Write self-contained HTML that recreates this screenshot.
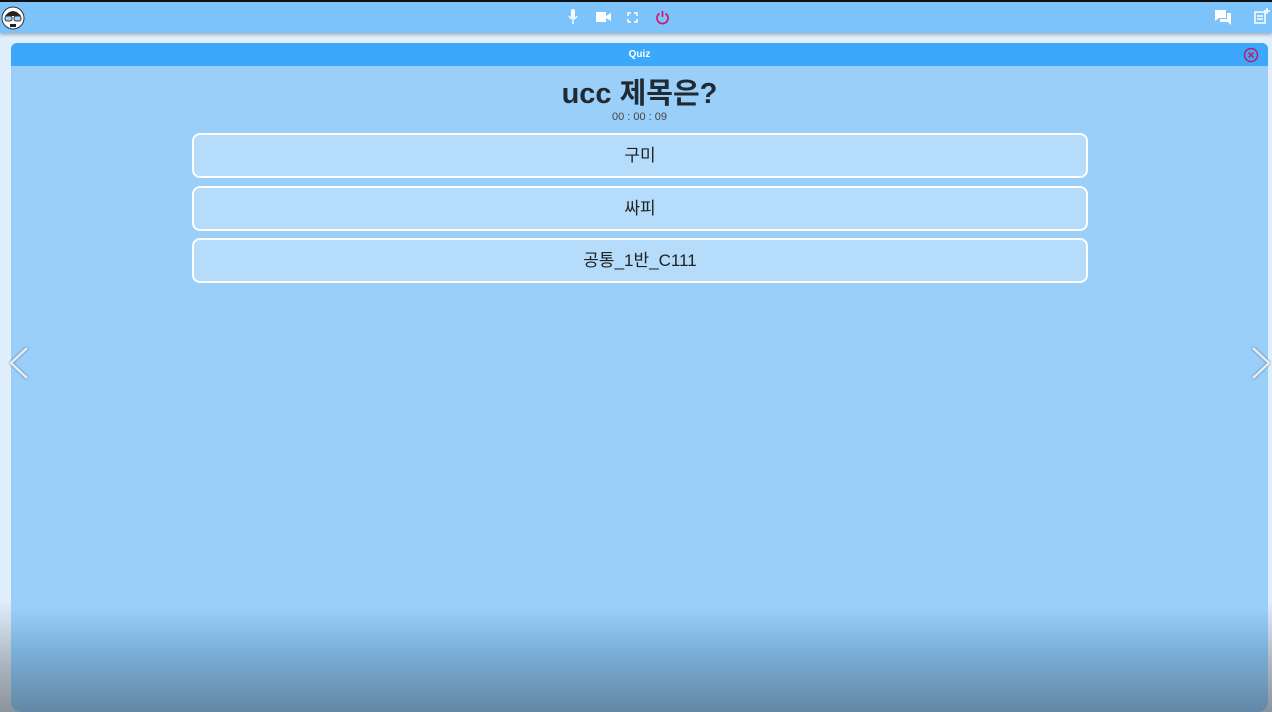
<!DOCTYPE html>
<html><head><meta charset="utf-8"><style>
*{margin:0;padding:0;box-sizing:border-box}
body{width:1272px;height:712px;overflow:hidden;background:#e1eefc;font-family:"Liberation Sans","Noto Sans CJK KR",sans-serif;position:relative}
.black{position:absolute;left:0;top:0;width:1272px;height:2px;background:#111}
.top{position:absolute;left:0;top:2px;width:1272px;height:31px;background:#7dc3fb;box-shadow:0 2px 3px rgba(0,0,0,.25)}
.fade{position:absolute;left:0;top:600px;width:1272px;height:112px;background:linear-gradient(#e1eefc00,#a9b3bd 60%,#8c949b)}
.panel{position:absolute;left:11px;top:43px;width:1257px;height:669px;border-radius:6px 6px 10px 10px;overflow:hidden;background:linear-gradient(#9acffa 0,#9acffa 565px,#7aaed6 610px,#6387a5 669px)}
.hdr{height:23px;background:#3ba8fb;color:#fff;font-size:10px;font-weight:bold;text-align:center;line-height:23px}
h1{position:absolute;left:0;width:100%;top:27px;text-align:center;font-size:29px;font-weight:bold;color:#1f2a33;font-family:"Liberation Sans","Noto Sans CJK KR",sans-serif}
.time{position:absolute;left:0;width:100%;top:68px;text-align:center;font-size:11px;color:#444}
.opt{position:absolute;left:181px;width:896px;height:45px;background:#b5dcfa;border:2px solid #fff;border-radius:8px;text-align:center;font-size:17px;line-height:41px;color:#222}
.arr{position:absolute;top:346px;filter:drop-shadow(0 0 1px rgba(0,0,0,.5))}
</style></head><body>
<div class="black"></div>
<div class="top">
<svg style="position:absolute;left:1px;top:4px" width="24" height="24" viewBox="0 0 24 24"><circle cx="12" cy="12" r="11" fill="#fff" stroke="#333"/><path d="M4 10 Q12 0 20 10 Z" fill="#222"/><rect x="4" y="10" width="7" height="5" rx="2" fill="#9fd0ff" stroke="#333"/><rect x="13" y="10" width="7" height="5" rx="2" fill="#9fd0ff" stroke="#333"/><path d="M9 18 h6 v3 h-6z" fill="#222"/></svg>
<svg style="position:absolute;left:567px;top:7px" width="12" height="16" viewBox="0 0 12 16"><rect x="4" y="0" width="4" height="9" rx="2" fill="#fff"/><path d="M2 7 q4 6 8 0 M6 11 v4" stroke="#fff" fill="none" stroke-width="1.4"/></svg>
<svg style="position:absolute;left:596px;top:10px" width="15" height="10" viewBox="0 0 15 10"><rect width="10" height="10" fill="#fff"/><path d="M10 4 L15 1 V9 L10 6Z" fill="#fff"/></svg>
<svg style="position:absolute;left:627px;top:10px" width="11" height="11" viewBox="0 0 11 11" fill="none" stroke="#fff" stroke-width="1.5"><path d="M1 4V1h3M7 1h3v3M10 7v3H7M4 10H1V7"/></svg>
<svg style="position:absolute;left:655px;top:8px" width="15" height="15" viewBox="0 0 15 15" fill="none" stroke="#d0146a" stroke-width="1.7"><path d="M4.5 3.5 A5.5 5.5 0 1 0 10.5 3.5M7.5 1v6"/></svg>
<svg style="position:absolute;left:1215px;top:8px" width="17" height="15" viewBox="0 0 17 15"><path d="M0 0h11v8H4L0 11z" fill="#fff"/><path d="M12 3h4v12l-3-3H5V9h7z" fill="#fff"/></svg>
<svg style="position:absolute;left:1254px;top:6px" width="16" height="17" viewBox="0 0 16 17" fill="none" stroke="#fff" stroke-width="1.5"><rect x="1" y="4" width="10" height="11"/><path d="M3 8h6M3 11h6M13 0v6M10 3h6"/></svg>
</div>
<div class="fade"></div>
<div class="panel">
<div class="hdr">Quiz</div>
<svg style="position:absolute;left:1232px;top:4px" width="16" height="16" viewBox="0 0 16 16" fill="none" stroke="#c0186a" stroke-width="1.5"><circle cx="8" cy="8" r="6.5"/><path d="M5.5 5.5l5 5M10.5 5.5l-5 5"/></svg>
<h1>ucc 제목은?</h1>
<div class="time">00 : 00 : 09</div>
<div class="opt" style="top:90px">구미</div>
<div class="opt" style="top:143px">싸피</div>
<div class="opt" style="top:195px">공통_1반_C111</div>
</div>
<svg class="arr" style="left:8px" width="22" height="34" viewBox="0 0 22 34" fill="none" stroke="#e4ecf4" stroke-width="2.5"><path d="M19 2 L3 17 L19 32"/></svg>
<svg class="arr" style="left:1250px" width="22" height="34" viewBox="0 0 22 34" fill="none" stroke="#e4ecf4" stroke-width="2.5"><path d="M3 2 L19 17 L3 32"/></svg>
</body></html>
